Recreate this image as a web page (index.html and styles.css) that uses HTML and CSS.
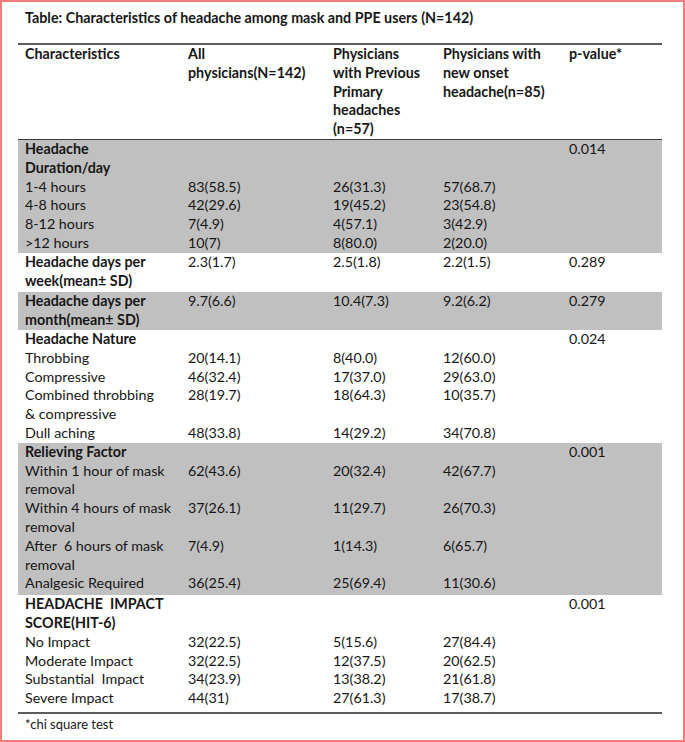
FILE: index.html
```html
<!DOCTYPE html>
<html lang="en">
<head>
<meta charset="utf-8">
<title>Characteristics of headache among mask and PPE users</title>
<link rel="stylesheet" href="styles.css">
</head>
<body>
<div class="page">
  <p class="title">Table: Characteristics of headache among mask and PPE users (N=142)</p>
  <table class="data">
    <colgroup>
      <col class="c1"><col class="c2"><col class="c3"><col class="c4"><col class="c5">
    </colgroup>
    <thead>
      <tr>
        <th>Characteristics</th>
        <th>All<br>physicians(N=142)</th>
        <th>Physicians<br>with Previous<br>Primary<br>headaches<br>(n=57)</th>
        <th>Physicians with<br>new onset<br>headache(n=85)</th>
        <th>p-value*</th>
      </tr>
    </thead>
    <tbody class="gray">
      <tr><td class="h">Headache<br>Duration/day</td><td></td><td></td><td></td><td>0.014</td></tr>
      <tr><td>1-4 hours</td><td>83(58.5)</td><td>26(31.3)</td><td>57(68.7)</td><td></td></tr>
      <tr><td>4-8 hours</td><td>42(29.6)</td><td>19(45.2)</td><td>23(54.8)</td><td></td></tr>
      <tr><td>8-12 hours</td><td>7(4.9)</td><td>4(57.1)</td><td>3(42.9)</td><td></td></tr>
      <tr><td>&gt;12 hours</td><td>10(7)</td><td>8(80.0)</td><td>2(20.0)</td><td></td></tr>
    </tbody>
    <tbody class="white week">
      <tr><td class="h">Headache days per<br>week(mean± SD)</td><td>2.3(1.7)</td><td>2.5(1.8)</td><td>2.2(1.5)</td><td>0.289</td></tr>
    </tbody>
    <tbody class="gray month">
      <tr><td class="h">Headache days per<br>month(mean± SD)</td><td>9.7(6.6)</td><td>10.4(7.3)</td><td>9.2(6.2)</td><td>0.279</td></tr>
    </tbody>
    <tbody class="white nature">
      <tr><td class="h">Headache Nature</td><td></td><td></td><td></td><td>0.024</td></tr>
      <tr><td>Throbbing</td><td>20(14.1)</td><td>8(40.0)</td><td>12(60.0)</td><td></td></tr>
      <tr><td>Compressive</td><td>46(32.4)</td><td>17(37.0)</td><td>29(63.0)</td><td></td></tr>
      <tr><td>Combined throbbing<br>&amp; compressive</td><td>28(19.7)</td><td>18(64.3)</td><td>10(35.7)</td><td></td></tr>
      <tr><td>Dull aching</td><td>48(33.8)</td><td>14(29.2)</td><td>34(70.8)</td><td></td></tr>
    </tbody>
    <tbody class="gray relief">
      <tr><td class="h">Relieving Factor</td><td></td><td></td><td></td><td>0.001</td></tr>
      <tr><td>Within 1 hour of mask<br>removal</td><td>62(43.6)</td><td>20(32.4)</td><td>42(67.7)</td><td></td></tr>
      <tr><td>Within 4 hours of mask<br>removal</td><td>37(26.1)</td><td>11(29.7)</td><td>26(70.3)</td><td></td></tr>
      <tr><td>After&nbsp; 6 hours of mask<br>removal</td><td>7(4.9)</td><td>1(14.3)</td><td>6(65.7)</td><td></td></tr>
      <tr><td>Analgesic Required</td><td>36(25.4)</td><td>25(69.4)</td><td>11(30.6)</td><td></td></tr>
    </tbody>
    <tbody class="white hit">
      <tr><td class="h">HEADACHE&nbsp; IMPACT<br>SCORE(HIT-6)</td><td></td><td></td><td></td><td>0.001</td></tr>
      <tr><td>No Impact</td><td>32(22.5)</td><td>5(15.6)</td><td>27(84.4)</td><td></td></tr>
      <tr><td>Moderate Impact</td><td>32(22.5)</td><td>12(37.5)</td><td>20(62.5)</td><td></td></tr>
      <tr><td>Substantial&nbsp; Impact</td><td>34(23.9)</td><td>13(38.2)</td><td>21(61.8)</td><td></td></tr>
      <tr><td>Severe Impact</td><td>44(31)</td><td>27(61.3)</td><td>17(38.7)</td><td></td></tr>
    </tbody>
  </table>
  <p class="note">*chi square test</p>
</div>
</body>
</html>
```

FILE: styles.css
```css
html, body {
  margin: 0;
  padding: 0;
  background: #ffffff;
}

.page {
  box-sizing: border-box;
  width: 685px;
  height: 742px;
  border: 2px solid #f27d7d;
  padding: 6px 21px 0 16px;
  font-family: Lato, "Open Sans", sans-serif;
  font-size: 14.3px;
  color: #161616;
}

.title {
  margin: 0 0 16px 0;
  padding-left: 7px;
  font-weight: bold;
  font-size: 14.3px;
  line-height: 19px;
  white-space: nowrap;
}

.data {
  width: 644px;
  table-layout: fixed;
  border-collapse: separate;
  border-spacing: 0;
  border-top: 2px solid #5c5c5c;
  border-bottom: 2px solid #5c5c5c;
}

.c1 { width: 163px; }
.c2 { width: 145px; }
.c3 { width: 110px; }
.c4 { width: 126px; }
.c5 { width: 100px; }

.data th,
.data td {
  padding: 0 0 0 7px;
  line-height: 18.8px;
  text-align: left;
  vertical-align: top;
  white-space: nowrap;
}

.data th {
  font-weight: bold;
  border-bottom: 1px solid #3c3c3c;
}

.data td.h {
  font-weight: bold;
}

.gray td {
  background: #c0c0c0;
}

.week td {
  padding-bottom: 2px;
}

.relief tr:last-child td {
  padding-bottom: 2px;
}

.hit tr:last-child td {
  padding-bottom: 4px;
}

.note {
  margin: 0;
  padding-left: 7px;
  font-size: 13px;
  line-height: 20px;
}
```
